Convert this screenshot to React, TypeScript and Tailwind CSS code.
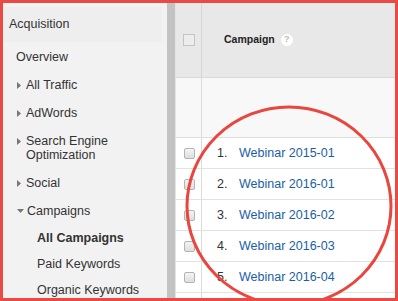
import React from 'react';

const navItems: { label: string; arrow?: 'right' | 'down'; indent: number; lines?: string[]; bold?: boolean; h: number }[] = [
  { label: 'Overview', indent: 13, h: 28 },
  { label: 'All Traffic', arrow: 'right', indent: 14, h: 28 },
  { label: 'AdWords', arrow: 'right', indent: 14, h: 28 },
  { label: 'Search Engine', lines: ['Search Engine', 'Optimization'], arrow: 'right', indent: 14, h: 42 },
  { label: 'Social', arrow: 'right', indent: 14, h: 28 },
  { label: 'Campaigns', arrow: 'down', indent: 14, h: 28 },
  { label: 'All Campaigns', indent: 34, bold: true, h: 26 },
  { label: 'Paid Keywords', indent: 34, h: 26 },
  { label: 'Organic Keywords', indent: 34, h: 26 },
];

const rows = ['Webinar 2015-01', 'Webinar 2016-01', 'Webinar 2016-02', 'Webinar 2016-03', 'Webinar 2016-04'];

const Arrow: React.FC<{ dir: 'right' | 'down'; className?: string }> = ({ dir, className = '' }) =>
  dir === 'right' ? (
    <svg width="4" height="7" viewBox="0 0 4 7" className={`mr-[5px] shrink-0 ${className}`}>
      <path d="M0 0 L4 3.5 L0 7 Z" fill="#777" />
    </svg>
  ) : (
    <svg width="7" height="4" viewBox="0 0 7 4" className={`mr-[3px] shrink-0 ${className}`}>
      <path d="M0 0 L7 0 L3.5 4 Z" fill="#777" />
    </svg>
  );

const RowCheckbox: React.FC = () => (
  <div className="w-[11px] h-[11px] rounded-[2px] border border-[#b4b4b4] bg-gradient-to-b from-[#f4f4f4] to-[#dedede]" />
);

export default function App() {
  return (
    <div className="w-[398px] h-[301px] border-[3px] border-[#ea4a44] bg-white overflow-hidden relative font-['Liberation_Sans',Arial,sans-serif]">
      <div className="flex h-full">
        {/* sidebar */}
        <div className="w-[164px] shrink-0 bg-[#f2f2f2] pt-[4px]">
          <div className="w-[159px] h-[35px] bg-[#eeeeee] flex items-center pl-[6px] text-[12.5px] text-[#333]">
            Acquisition
          </div>
          <div className="pt-[1px]">
            {navItems.map((it) => (
              <div
                key={it.label}
                className={`flex text-[12.5px] text-[#333] ${it.lines ? 'items-start pt-[7px]' : 'items-center'}`}
                style={{ height: it.h, paddingLeft: it.indent }}
              >
                {it.arrow && <Arrow dir={it.arrow} className={it.lines ? 'mt-[4px]' : ''} />}
                {it.lines ? (
                  <div className="leading-[14px]">
                    {it.lines.map((l) => (
                      <div key={l}>{l}</div>
                    ))}
                  </div>
                ) : (
                  <span className={it.bold ? 'font-bold' : ''}>{it.label}</span>
                )}
              </div>
            ))}
          </div>
        </div>
        {/* divider bar */}
        <div className="w-[8px] shrink-0 bg-[#c3c3c3]" />
        <div className="w-[1px] shrink-0 bg-[#e4e4e4]" />
        {/* table */}
        <div className="flex-1 flex flex-col">
          <div className="h-[75px] flex bg-[#e8e8e8] border-b border-[#d9d9d9]">
            <div className="w-[26px] shrink-0 border-r border-[#d6d6d6] flex items-center justify-center pl-[1px]">
              <div className="w-[12px] h-[12px] border border-[#c4c4c4] bg-[#ececec]" />
            </div>
            <div className="flex items-center pl-[22px] text-[10.5px] font-bold text-[#222]">
              Campaign
              <span className="ml-[6px] w-[12px] h-[12px] rounded-full bg-white text-[#bbbbbb] text-[9px] font-bold flex items-center justify-center">
                ?
              </span>
            </div>
          </div>
          <div className="h-[60px] flex bg-[#f8f8f8] border-b border-[#dedede]">
            <div className="w-[26px] shrink-0 border-r border-[#dcdcdc]" />
          </div>
          {rows.map((r, i) => (
            <div key={r} className="h-[31px] shrink-0 flex border-b border-[#e2e2e2]">
              <div className="w-[26px] shrink-0 border-r border-[#dcdcdc] flex items-center justify-center pl-[1px]">
                <RowCheckbox />
              </div>
              <div className="flex items-center pl-[15px] text-[12.5px]">
                <span className="w-[22px] text-[#333]">{i + 1}.</span>
                <span className="text-[#1b5ea6]">{r}</span>
              </div>
            </div>
          ))}
          <div className="flex flex-1">
            <div className="w-[26px] shrink-0 border-r border-[#dcdcdc]" />
          </div>
        </div>
      </div>
      {/* red circle annotation */}
      <svg className="absolute left-0 top-0 pointer-events-none" width="392" height="295" viewBox="0 0 392 295">
        <ellipse cx="286" cy="203" rx="102" ry="99" fill="none" stroke="#e8463f" strokeWidth="3" />
      </svg>
    </div>
  );
}
